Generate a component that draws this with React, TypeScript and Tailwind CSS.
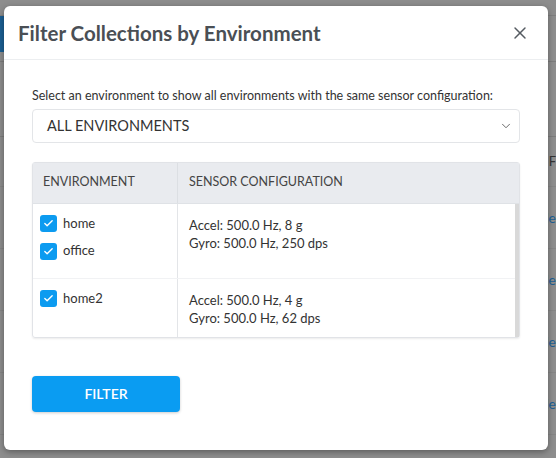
import { Check, ChevronDown, X } from "lucide-react";

const groups = [
  { envs: ["home", "office"], accel: "Accel: 500.0 Hz, 8 g", gyro: "Gyro: 500.0 Hz, 250 dps", h: "h-[75px]" },
  { envs: ["home2"], accel: "Accel: 500.0 Hz, 4 g", gyro: "Gyro: 500.0 Hz, 62 dps", h: "h-[58px]" },
];

function Backdrop() {
  return (
    <div className="absolute inset-0 bg-[#8d8d8d]">
      <div className="h-[16px] border-b border-[#7f7f7f]" />
      <div className="flex h-[46px] border-b border-[#7c7c7c]">
        <div className="h-[36px] w-[6px] bg-[#1b5f93]" />
      </div>
      <div className="h-[75px] border-b border-[#7c7c7c]" />
      <div className="flex h-[50px] items-center justify-end border-b border-[#858585] text-[13px] text-[#333]">F</div>
      {["de", "de", "de", "de"].map((t, i) => (
        <div key={i} className="flex h-[62px] items-center justify-end border-b border-[#858585] text-[14px] text-[#1d5f94]">
          {t}
        </div>
      ))}
    </div>
  );
}

export default function App() {
  return (
    <div className="relative h-[458px] w-[556px] overflow-hidden font-['Lato','Open_Sans',sans-serif]">
      <Backdrop />
      <div className="absolute left-[4px] top-[6px] h-[444px] w-[544px] rounded-md bg-white shadow-[0_2px_6px_rgba(0,0,0,0.35)]">
        <div className="flex h-[54px] items-center justify-between border-b border-[#eceef0] pl-[14px] pr-[18px]">
          <h1 className="pt-[2px] text-[20.5px] font-bold text-[#4a4f55]">Filter Collections by Environment</h1>
          <X className="h-[20px] w-[20px] text-[#555b61]" strokeWidth={1.75} />
        </div>
        <div className="px-[28px] pt-[27px]">
          <p className="text-[12.5px] text-[#333]">Select an environment to show all environments with the same sensor configuration:</p>
          <div className="mt-[3px] flex h-[34px] items-center justify-between rounded-[4px] border border-[#e3e5e8] pl-[14px] pr-[6px]">
            <span className="text-[14.5px] text-[#333]">ALL ENVIRONMENTS</span>
            <ChevronDown className="h-[14px] w-[14px] text-[#555]" strokeWidth={1.5} />
          </div>
          <div className="mt-[19px] rounded-[3px] border border-[#e1e3e7] shadow-[0_1px_2px_rgba(0,0,0,0.08)]">
            <div className="flex h-[41px] items-center border-b border-[#dfe2e6] bg-[#e9ebef] text-[12.5px] text-[#444]">
              <div className="flex h-full w-[145px] items-center border-r border-[#dcdfe3] pl-[10px]">ENVIRONMENT</div>
              <div className="pl-[11px]">SENSOR CONFIGURATION</div>
            </div>
            <div className="flex">
              <div className="flex-1">
                {groups.map((g, i) => (
                  <div key={i} className={`flex ${g.h} ${i === 0 ? "border-b border-[#f1f2f4]" : ""}`}>
                    <div className="flex w-[145px] flex-col gap-[8px] border-r border-[#e3e5e8] pl-[7px] pt-[10px]">
                      {g.envs.map((e) => (
                        <label key={e} className="flex items-center gap-[6px] text-[13px] text-[#333]">
                          <span className="flex h-[17px] w-[17px] items-center justify-center rounded-[3px] bg-[#0c9bf0]">
                            <Check className="h-[11px] w-[11px] text-white" strokeWidth={3} />
                          </span>
                          {e}
                        </label>
                      ))}
                    </div>
                    <div className="pl-[11px] pt-[12px] text-[13px] leading-[18px] text-[#333]">
                      <div>{g.accel}</div>
                      <div>{g.gyro}</div>
                    </div>
                  </div>
                ))}
              </div>
              <div className="w-[4px] bg-[#d9d9d9]" />
            </div>
          </div>
          <button className="mt-[38px] h-[36px] w-[148px] rounded-[4px] bg-[#0a9cf2] text-[14px] font-semibold text-white shadow-[0_1px_3px_rgba(0,0,0,0.2)]">
            FILTER
          </button>
        </div>
      </div>
    </div>
  );
}
